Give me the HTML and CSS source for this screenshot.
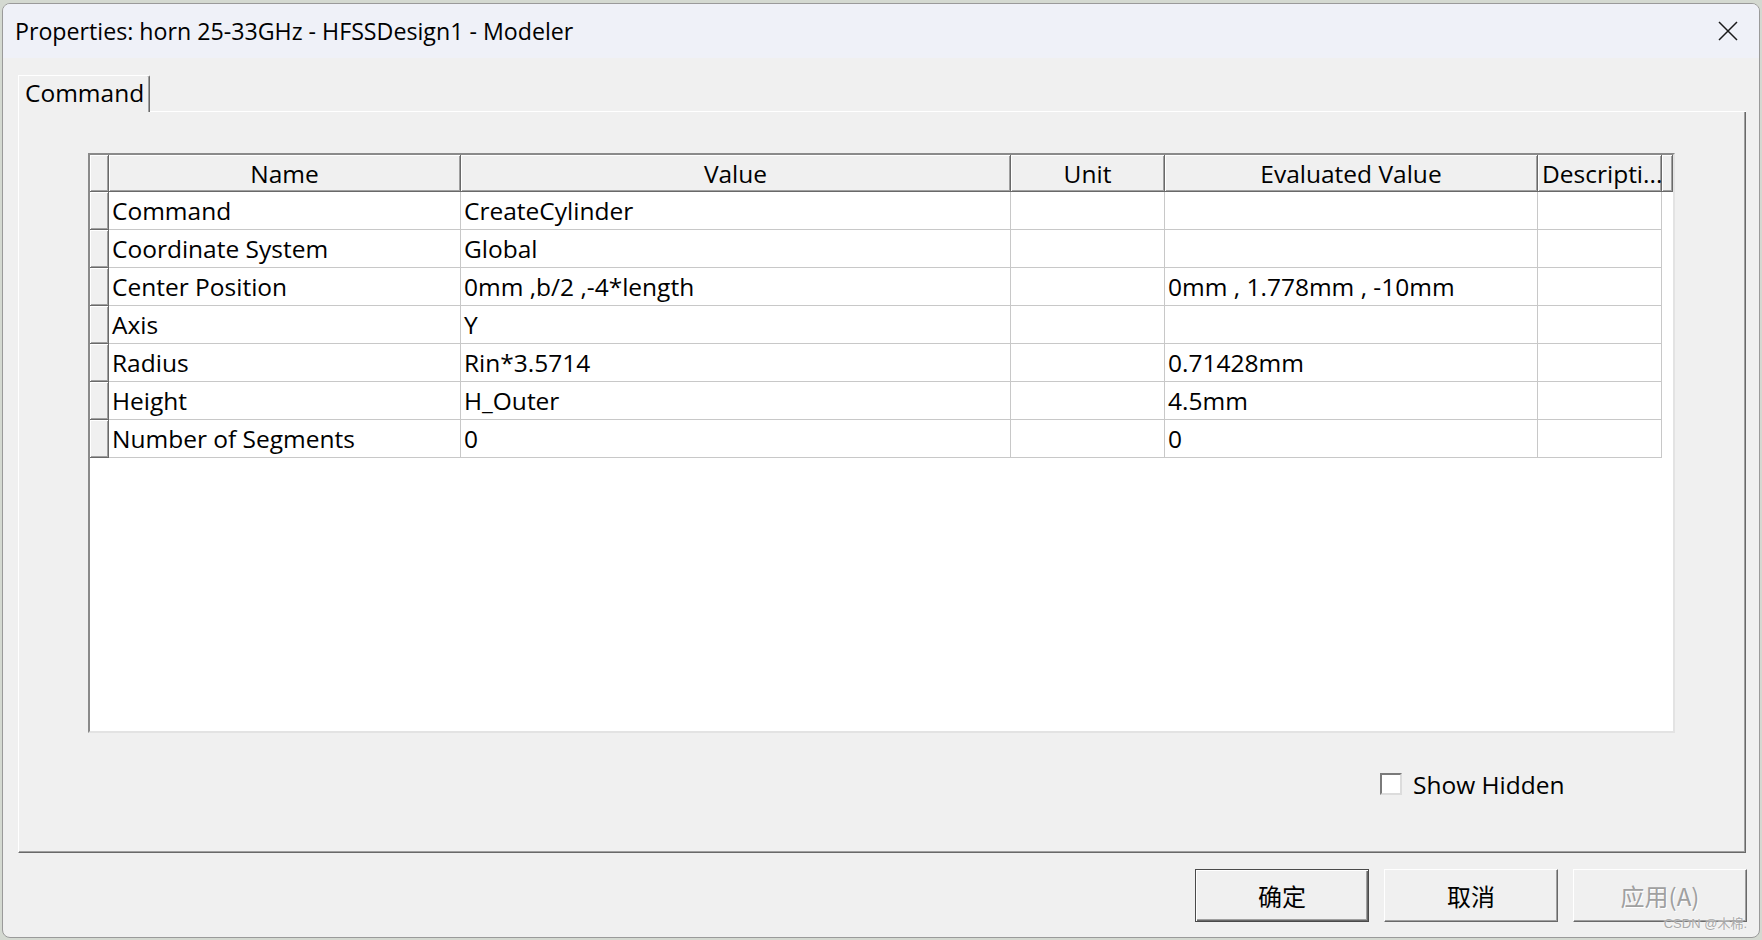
FILE: index.html
```html
<!DOCTYPE html>
<html>
<head>
<meta charset="utf-8">
<title>Properties</title>
<link rel="stylesheet" href="styles.css">
</head>
<body>
<div class="window">
  <div class="titlebar">
    <span class="title">Properties: horn 25-33GHz - HFSSDesign1 - Modeler</span>
    <svg class="close" viewBox="0 0 20 20"><path d="M1 1 L19 19 M19 1 L1 19" stroke="#1a1a1a" stroke-width="1.5" fill="none"/></svg>
  </div>
  <div class="body">
    <div class="tabs">
      <div class="tab">Command</div>
      <div class="tab-fill"></div>
    </div>
    <div class="panel">
      <div class="grid">
        <div class="row head">
          <div class="hc"></div>
          <div class="hc center">Name</div>
          <div class="hc center">Value</div>
          <div class="hc center">Unit</div>
          <div class="hc center">Evaluated Value</div>
          <div class="hc left">Descripti...</div>
          <div class="hc"></div>
        </div>
        <div class="row">
          <div class="hc"></div><div class="dc">Command</div><div class="dc">CreateCylinder</div><div class="dc"></div><div class="dc"></div><div class="dc"></div><div class="fill"></div>
        </div>
        <div class="row">
          <div class="hc"></div><div class="dc">Coordinate System</div><div class="dc">Global</div><div class="dc"></div><div class="dc"></div><div class="dc"></div><div class="fill"></div>
        </div>
        <div class="row">
          <div class="hc"></div><div class="dc">Center Position</div><div class="dc">0mm ,b/2 ,-4*length</div><div class="dc"></div><div class="dc">0mm , 1.778mm , -10mm</div><div class="dc"></div><div class="fill"></div>
        </div>
        <div class="row">
          <div class="hc"></div><div class="dc">Axis</div><div class="dc">Y</div><div class="dc"></div><div class="dc"></div><div class="dc"></div><div class="fill"></div>
        </div>
        <div class="row">
          <div class="hc"></div><div class="dc">Radius</div><div class="dc">Rin*3.5714</div><div class="dc"></div><div class="dc">0.71428mm</div><div class="dc"></div><div class="fill"></div>
        </div>
        <div class="row">
          <div class="hc"></div><div class="dc">Height</div><div class="dc">H_Outer</div><div class="dc"></div><div class="dc">4.5mm</div><div class="dc"></div><div class="fill"></div>
        </div>
        <div class="row">
          <div class="hc"></div><div class="dc">Number of Segments</div><div class="dc">0</div><div class="dc"></div><div class="dc">0</div><div class="dc"></div><div class="fill"></div>
        </div>
      </div>
      <div class="options">
        <span class="checkbox"></span>
        <span class="check-label">Show Hidden</span>
      </div>
    </div>
    <div class="buttons">
      <div class="btn default">确定</div>
      <div class="btn">取消</div>
      <div class="btn disabled">应用(A)</div>
    </div>
  </div>
  <div class="watermark">CSDN @木棉.</div>
</div>
</body>
</html>
```

FILE: styles.css
```css
* { box-sizing: border-box; }
html, body { margin: 0; padding: 0; }
body {
  width: 1762px;
  height: 940px;
  overflow: hidden;
  background: #d4d9d1;
  font-family: "Open Sans", "Noto Sans CJK SC", sans-serif;
  font-size: 24.5px;
  color: #000;
}
.window {
  position: relative;
  margin: 3px 0 0 2px;
  width: 1758px;
  height: 935px;
  border: 1px solid #9a9a9a;
  border-radius: 8px;
  background: #f0f0f0;
  overflow: hidden;
  display: flex;
  flex-direction: column;
}
.titlebar {
  height: 54px;
  flex: none;
  background: #eff1f8;
  display: flex;
  align-items: center;
  justify-content: space-between;
  padding: 0 21px 0 12px;
}
.title { font-size: 23.2px; white-space: nowrap; }
.close { width: 20px; height: 20px; display: block; }
.body {
  flex: 1;
  padding: 17px 13px 0 15px;
  display: flex;
  flex-direction: column;
}
.tabs { display: flex; height: 37px; flex: none; }
.tab {
  width: 132px;
  height: 37px;
  border-top: 1px solid #fff;
  border-left: 1px solid #fff;
  border-right: 1px solid #696969;
  border-top-right-radius: 2px;
  box-shadow: inset -1px 0 #a0a0a0;
  padding-left: 6px;
  line-height: 34px;
  white-space: nowrap;
}
.tab-fill { flex: 1; border-bottom: 1px solid #fff; }
.panel {
  height: 741px;
  flex: none;
  border-left: 1px solid #fff;
  border-right: 1px solid #696969;
  border-bottom: 1px solid #696969;
  box-shadow: inset -1px -1px #a0a0a0;
  padding: 41px 0 0 69px;
}
.grid {
  width: 1587px;
  height: 580px;
  background: #fff;
  border: 2px solid;
  border-color: #8a8a8a #e3e3e3 #e3e3e3 #8a8a8a;
}
.row {
  display: grid;
  grid-template-columns: 19px 352px 550px 154px 373px 124px 11px;
  height: 38px;
}
.row.head { height: 37px; }
.hc {
  background: #f0f0f0;
  border-right: 1px solid #696969;
  border-bottom: 1px solid #696969;
  box-shadow: inset 1px 1px #fff, inset -1px -1px #a0a0a0;
  display: flex;
  align-items: center;
  white-space: nowrap;
  overflow: hidden;
}
.hc.center { justify-content: center; }
.hc.left { padding-left: 4px; }
.dc {
  border-right: 1px solid #c8c8c8;
  border-bottom: 1px solid #c8c8c8;
  display: flex;
  align-items: center;
  padding-left: 3px;
  white-space: nowrap;
  overflow: hidden;
}
.fill { background: #fff; }
.options {
  margin-top: 40px;
  padding-left: 1292px;
  display: flex;
  align-items: center;
  height: 22px;
}
.checkbox {
  width: 22px;
  height: 22px;
  flex: none;
  background: #fff;
  border: 2px solid;
  border-color: #7a7a7a #dcdcdc #dcdcdc #7a7a7a;
}
.check-label { margin-left: 11px; white-space: nowrap; }
.buttons {
  margin-top: 16px;
  margin-right: -1px;
  display: flex;
  justify-content: flex-end;
  gap: 15px;
}
.btn {
  width: 174px;
  height: 53px;
  background: #f0f0f0;
  border-top: 1px solid #fff;
  border-left: 1px solid #fff;
  border-right: 1px solid #696969;
  border-bottom: 1px solid #696969;
  box-shadow: inset -1px -1px #a0a0a0;
  display: flex;
  align-items: center;
  justify-content: center;
  font-family: "Noto Sans CJK SC", "Open Sans", sans-serif;
  font-size: 24px;
}
.btn.default {
  border: 1px solid #4a4a4a;
  box-shadow: inset 1px 1px #fff, inset -1px -1px #696969, inset -2px -2px #a0a0a0;
}
.btn.disabled {
  color: #a0a0a0;
  text-shadow: 1px 1px 0 #fff;
}
.watermark {
  position: absolute;
  right: 12px;
  bottom: 5px;
  font-family: "Liberation Sans", "Noto Sans CJK SC", sans-serif;
  font-size: 13px;
  color: #a8a8a8;
  text-shadow: 0 0 2px #fff;
}
```
